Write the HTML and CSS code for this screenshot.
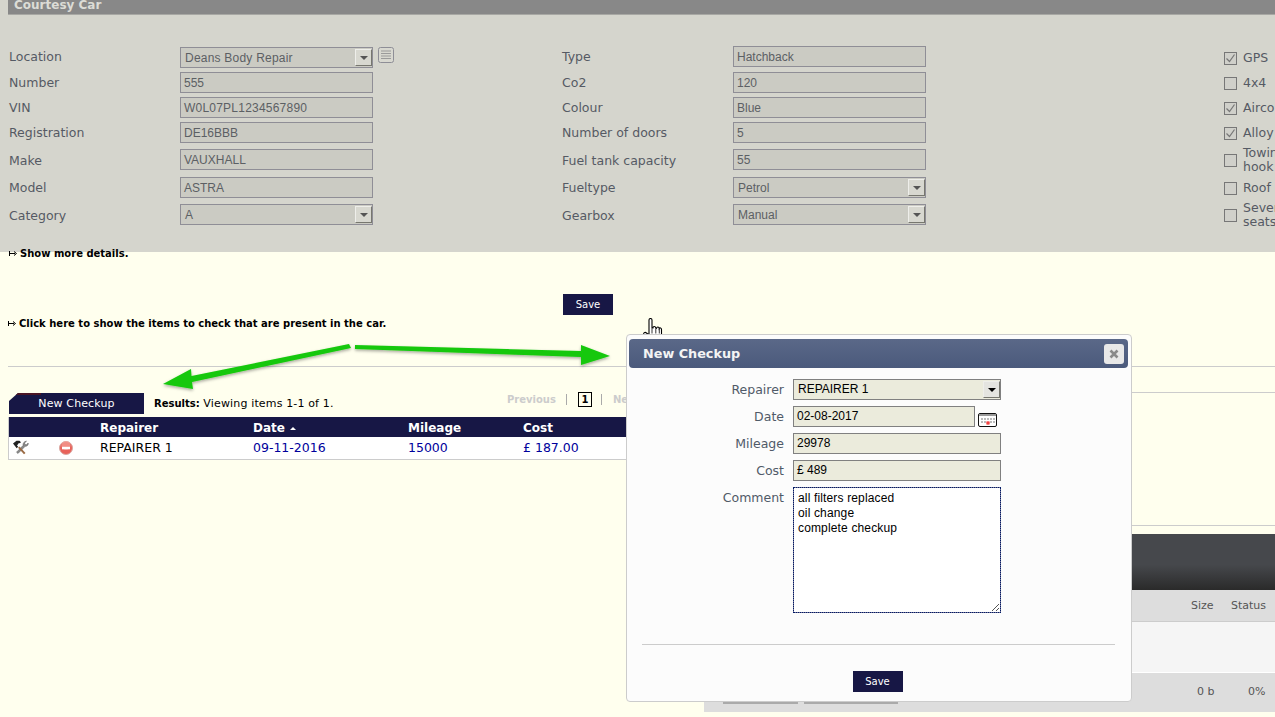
FILE: index.html
```html
<!DOCTYPE html>
<html lang="en">
<head>
<meta charset="utf-8">
<title>Courtesy Car</title>
<link rel="stylesheet" href="styles.css">
</head>
<body>
<section class="car">
  <h2 class="car-title">Courtesy Car</h2>
  <div class="car-form">
    <div class="lbl lbl-top">Location</div>
    <div class="field-wrap"><div class="fld sel wide">Deans Body Repair<span class="sel-btn"></span></div>
      <svg class="list-ico" width="16" height="16" viewBox="0 0 16 16"><rect x=".5" y=".5" width="15" height="15" rx="2" fill="#d8d8d0" stroke="#8e8e96"/><path d="M3 4h10M3 6.500h10M3 9h10M3 11.500h10" stroke="#9a9a9a"/></svg></div>
    <div class="lbl lbl-top">Type</div><div class="fld fld-up">Hatchback</div>
    <label class="chk"><span class="box on"><svg width="11" height="11" viewBox="0 0 11 11"><path d="M1.500 5.500l3 3 5-7" fill="none" stroke="#777" stroke-width="1.200"/></svg></span><span>GPS</span></label>

    <div class="lbl">Number</div><div class="fld">555</div>
    <div class="lbl">Co2</div><div class="fld">120</div>
    <label class="chk"><span class="box"></span><span>4x4</span></label>

    <div class="lbl">VIN</div><div class="fld wide">W0L07PL1234567890</div>
    <div class="lbl">Colour</div><div class="fld">Blue</div>
    <label class="chk"><span class="box on"><svg width="11" height="11" viewBox="0 0 11 11"><path d="M1.500 5.500l3 3 5-7" fill="none" stroke="#777" stroke-width="1.200"/></svg></span><span>Airco</span></label>

    <div class="lbl">Registration</div><div class="fld">DE16BBB</div>
    <div class="lbl">Number of doors</div><div class="fld">5</div>
    <label class="chk"><span class="box on"><svg width="11" height="11" viewBox="0 0 11 11"><path d="M1.500 5.500l3 3 5-7" fill="none" stroke="#777" stroke-width="1.200"/></svg></span><span>Alloy</span></label>

    <div class="lbl lbl-low">Make</div><div class="fld">VAUXHALL</div>
    <div class="lbl lbl-low">Fuel tank capacity</div><div class="fld">55</div>
    <label class="chk"><span class="box"></span><span>Towing hook</span></label>

    <div class="lbl">Model</div><div class="fld">ASTRA</div>
    <div class="lbl">Fueltype</div><div class="fld sel">Petrol<span class="sel-btn"></span></div>
    <label class="chk"><span class="box"></span><span>Roof</span></label>

    <div class="lbl lbl-low">Category</div><div class="fld sel">A<span class="sel-btn"></span></div>
    <div class="lbl lbl-low">Gearbox</div><div class="fld sel">Manual<span class="sel-btn"></span></div>
    <label class="chk"><span class="box"></span><span>Seven seats</span></label>
  </div>
</section>

<a class="toggle toggle-more"><svg class="tog-ico" width="8" height="5" viewBox="0 0 8 5"><path d="M.5 0v5M1 2.500h5M5 .5l2.500 2L5 4.500" fill="none" stroke="#000"/></svg>Show more details.</a>
<div class="save-row"><button class="btn">Save</button></div>
<a class="toggle toggle-items"><svg class="tog-ico" width="8" height="5" viewBox="0 0 8 5"><path d="M.5 0v5M1 2.500h5M5 .5l2.500 2L5 4.500" fill="none" stroke="#000"/></svg>Click here to show the items to check that are present in the car.</a>
<hr class="rule">

<div class="lower">
  <div class="lower-left">
    <div class="toolbar">
      <a class="tab">New Checkup</a>
      <div class="results"><b>Results:</b> Viewing items 1-1 of 1.</div>
      <div class="pager"><span class="pg-off">Previous</span><i class="pg-sep"></i><span class="pg-cur">1</span><i class="pg-sep"></i><span class="pg-off">Next</span></div>
    </div>
    <table class="grid">
      <colgroup><col class="c1"><col class="c2"><col class="c3"><col class="c4"><col class="c5"><col></colgroup>
      <thead><tr><th></th><th></th><th>Repairer</th><th>Date <span class="sort"></span></th><th>Mileage</th><th>Cost</th></tr></thead>
      <tbody><tr>
        <td><svg class="ico-tools" width="17" height="15" viewBox="0 0 17 15"><path d="M14.500 1.200l-2 1.800.4 1.500 1.500.3 1.800-1.800c.3 2-1 3.500-3 3.300L6 13.500l-1.500-1.300L11 5.500c-.3-2.300 1.300-4.300 3.500-4.300z" fill="#8a8a8a" stroke="#555" stroke-width=".5"/><path d="M7.500 6.500l6 6.500-1.500 1.300-6-6.500z" fill="#9a6b45"/><path d="M1 3.500L4.500.7h3l1.500 1.500-1.300 1-.8-.2L5 5.500l1.200 1.200-1.500 1.500z" fill="#222"/></svg></td>
        <td><svg class="ico-del" width="14" height="14" viewBox="0 0 14 14"><circle cx="7" cy="7" r="6.500" fill="#e8625a" stroke="#d9a8a2"/><circle cx="7" cy="4.500" r="4.500" fill="#f6a49b" opacity=".65"/><rect x="3" y="5.800" width="8" height="2.500" fill="#fff"/></svg></td>
        <td>REPAIRER 1</td><td class="lnk">09-11-2016</td><td class="lnk">15000</td><td class="lnk">£ 187.00</td>
      </tr></tbody>
    </table>
  </div>
  <div class="lower-right">
    <div class="band"></div>
    <div class="up-panel">
      <div class="up-dark"></div>
      <div class="up-head"><span>Size</span><span>Status</span></div>
      <div class="up-body"></div>
      <div class="up-foot"><span class="up-b1"></span><span class="up-b2"></span><span class="up-size">0 b</span><span class="up-pct">0%</span></div>
    </div>
  </div>
</div>

<svg class="arrows" width="640" height="60" viewBox="0 0 640 60">
  <defs><filter id="sh" x="-10%" y="-30%" width="120%" height="170%"><feDropShadow dx="0" dy="1.500" stdDeviation="1.500" flood-color="#000" flood-opacity=".35"/></filter></defs>
  <g fill="#14c80a" filter="url(#sh)">
    <path d="M349 4L351 8 192 42l1 7-30-5 28-15 .5 7z"/>
    <path d="M355 5v4l226 8v8l29-9-29-11v6z"/>
  </g>
</svg>

<svg class="cursor" width="20" height="26" viewBox="0 0 20 26"><path d="M6 2c0-2 3-2 3 0v8h1c0-2 2.500-2 2.800 0l.7.300c.3-1.700 2.500-1.700 2.700.2.500-1 2.300-.8 2.300 1v6c0 3-1.500 6.500-3 7.500H8c-2-1.500-4-5-7-8.500-1-1.500 1-3 2.500-1.500L6 17z" fill="#fff" stroke="#000" stroke-width="1.100"/><path d="M9 10.500v5M12.800 10.500v5M16.300 11v4.500" stroke="#000" stroke-width=".8"/></svg>

<div class="modal">
  <div class="modal-head"><span>New Checkup</span><button class="close" aria-label="Close"><svg width="10" height="10" viewBox="0 0 10 10"><path d="M1.500 1.500l7 7M8.500 1.500l-7 7" stroke="#8a8a8a" stroke-width="2.600"/></svg></button></div>
  <div class="modal-form">
    <div class="m-lbl">Repairer</div><div class="m-fld sel">REPAIRER 1<span class="sel-btn"></span></div>
    <div class="m-lbl">Date</div><div class="date-wrap"><div class="m-fld date">02-08-2017</div>
      <svg class="cal" width="19" height="14" viewBox="0 0 19 14"><rect x=".5" y=".5" width="18" height="13" rx="1.500" fill="#fff" stroke="#111"/><rect x="1" y="1" width="17" height="2" fill="#999"/><path d="M3 5h2v2H3zM6 5h2v2H6zM9 5h2v2H9zM12 5h2v2h-2zM15 5h2v2h-2zM3 8h2v2H3zM6 8h2v2H6zM12 8h2v2h-2zM15 8h2v2h-2z" fill="#bbb"/><rect x="8.500" y="8.500" width="3" height="3" fill="#e00"/><rect x="9.500" y="9.500" width="1" height="1" fill="#fff"/></svg></div>
    <div class="m-lbl">Mileage</div><div class="m-fld">29978</div>
    <div class="m-lbl">Cost</div><div class="m-fld">£ 489</div>
    <div class="m-lbl">Comment</div><div class="m-area">all filters replaced<br>oil change<br>complete checkup<svg class="grip" width="10" height="10" viewBox="0 0 10 10"><path d="M9 2L2 9M9 6L6 9" stroke="#555"/></svg></div>
  </div>
  <hr class="modal-rule">
  <div class="modal-foot"><button class="btn">Save</button></div>
</div>
</body>
</html>
```

FILE: styles.css
```css
* { box-sizing: border-box; }
html, body { margin: 0; height: 717px; overflow: hidden; }
body {
  position: relative;
  width: 1275px;
  background: #ffffee;
  font: 13px "DejaVu Sans", Verdana, sans-serif;
  color: #000;
}

/* Top greyed form */
.car { height: 252px; background: #d5d5cd; padding-left: 8px; overflow: hidden; }
.car-title {
  margin: 0;
  height: 15px;
  padding-left: 6px;
  background: #888;
  border-bottom: 1px solid #a8a8a4;
  color: #dcdcd6;
  font-size: 12px;
  font-weight: bold;
  line-height: 10px;
}
.car-form {
  display: grid;
  grid-template-columns: 171px 193px 189px 171px 193px 298px 60px;
  grid-template-rows: 25px 25px 25px 27px 28px 27px 21px;
  margin: 32px 0 0 1px;
  width: 1300px;
}
.car-form > :nth-child(5n + 1) { grid-column: 1; }
.car-form > :nth-child(5n + 3) { grid-column: 4; }
.car-form > :nth-child(5n) { grid-column: 7; }
.lbl { height: 21px; font-size: 12.500px; line-height: 22px; color: #555a64; }
.lbl-top { line-height: 20px; }
.lbl-low { line-height: 24px; }
.fld, .m-fld {
  position: relative;
  height: 21px;
  font: 12px/19px "Liberation Sans", Arial, sans-serif;
  padding-left: 3px;
  border: 1px solid #8f8e96;
}
.fld { background: #cbcbc3; color: #5c6064; line-height: 21px; }
.fld-up { margin-top: -1px; }
.wide { letter-spacing: .22px; }
.sel { padding-left: 4px; }
.field-wrap { display: flex; width: 214px; align-items: flex-start; }
.field-wrap .fld { width: 193px; flex: none; }
.list-ico { margin-left: 5px; flex: none; }
.sel-btn {
  position: absolute;
  right: 0;
  top: 1px;
  width: 17px;
  height: 17px;
  background: #d8d8d0;
  border: 1px solid;
  border-color: #eeeeea #77776f #77776f #eeeeea;
}
.sel-btn::after {
  content: "";
  position: absolute;
  left: 4px;
  top: 6px;
  border: 4px solid transparent;
  border-top: 4px solid #555;
  border-bottom: 0;
}
.chk { display: flex; align-items: center; height: 21px; width: 60px; font-size: 12.500px; color: #555a64; line-height: 14px; }
.chk > span:last-child { width: 41px; flex: none; }
.box {
  flex: none;
  width: 13px;
  height: 13px;
  margin: 2px 6px 0 0;
  background: #d0d0ca;
  border: 1px solid #777;
}
.box svg { display: block; }

/* Toggles */
.toggle { display: block; font-size: 10px; font-weight: bold; line-height: 12px; }
.tog-ico { margin-right: 3px; vertical-align: 1px; }
.toggle-more { padding-left: 9px; margin-top: -4px; }
.toggle-items { padding-left: 8px; margin-top: 3px; }
.save-row { display: flex; justify-content: flex-start; padding: 34px 0 0 563px; }
.btn {
  width: 50px;
  height: 21px;
  border: 0;
  padding: 0;
  background: #171745;
  color: #fff;
  font: 10px/21px "DejaVu Sans", Verdana, sans-serif;
}
.rule { margin: 36px 0 0 8px; border: 0; border-top: 1px solid #ccc; }

/* Lower area */
.lower { display: grid; grid-template-columns: 704px 571px; margin-top: 25px; }
.lower-left { padding-left: 8px; }
.toolbar { display: flex; height: 25px; align-items: flex-start; position: relative; }
.tab {
  width: 135px;
  margin: 1px 0 0 1px;
  height: 21px;
  text-align: center;
  color: #fff;
  font-size: 11px;
  letter-spacing: .12px;
  line-height: 21px;
  background: linear-gradient(#4a1525, #4a1525) 0 0 / 32px 2px no-repeat, #171745;
  clip-path: polygon(9px 0, 100% 0, 100% 100%, 0 100%, 0 8px);
}
.results { margin: 5px 0 0 10px; font-size: 11px; letter-spacing: .15px; line-height: 13px; }
.results b { font-size: 10px; letter-spacing: 0; }
.pager { position: absolute; left: 499px; top: 0; display: flex; align-items: center; height: 15px; font-size: 10px; font-weight: bold; }
.pg-off { color: #ccc; }
.pg-sep { width: 1px; height: 11px; background: #aaa; margin: 0 11px 0 10px; }
.pg-cur { width: 14px; height: 15px; margin-right: -1px; border: 1px solid #000; text-align: center; line-height: 13px; }
.grid { width: 696px; border-collapse: collapse; table-layout: fixed; background: #fff; border-left: 1px solid #ccc; }
.c1 { width: 46.500px; } .c2 { width: 41px; } .c3 { width: 153px; } .c4 { width: 155px; } .c5 { width: 115px; }
.grid th {
  height: 20px;
  padding: 1px 0 0 4px;
  text-align: left;
  background: #171745;
  color: #fff;
  font-size: 12px;
}
.grid td { height: 22px; padding: 0 0 0 4px; border-bottom: 1px solid #ccc; font-size: 12.500px; vertical-align: middle; }
.grid td svg { display: block; }
.ico-tools { margin-left: -1px; }
.lnk { color: #00009c; }
.sort { display: inline-block; border: 3px solid transparent; border-bottom: 3px solid #fff; border-top: 0; vertical-align: 2px; margin-left: 1px; }

.band { height: 134px; border-top: 1px solid #ccc; border-bottom: 1px solid #ccc; }
.up-panel { margin-top: 8px; height: 178px; display: flex; flex-direction: column; background: #ddd; font-size: 11px; color: #555; }
.up-dark { height: 56px; background: linear-gradient(#46484c 0, #46484c 55%, #2a2a2a 100%); }
.up-head { position: relative; height: 32px; border-bottom: 1px solid #ccc; }
.up-head span { position: absolute; top: 9px; }
.up-head span:first-child { left: 487px; }
.up-head span:last-child { left: 527px; }
.up-body { height: 51px; background: #f5f5f5; border-bottom: 1px solid #fff; }
.up-foot { position: relative; flex: 1; }
.up-foot span { position: absolute; }
.up-size { left: 493px; top: 12px; }
.up-pct { left: 544px; top: 12px; }
.up-b1, .up-b2 { top: 29px; height: 2px; background: #aaa; }
.up-b1 { left: 19px; width: 75px; }
.up-b2 { left: 100px; width: 94px; }

/* Overlays */
.arrows { position: absolute; left: 0; top: 340px; overflow: visible; pointer-events: none; }
.cursor { position: absolute; left: 643px; top: 318px; }
.modal {
  position: absolute;
  left: 626px;
  top: 334px;
  width: 506px;
  height: 368px;
  padding: 4px 3px 0 2px;
  background: #fcfcfc;
  border: 1px solid #ccc;
  border-radius: 4px;
}
.modal-head {
  display: flex;
  align-items: center;
  justify-content: space-between;
  height: 29px;
  padding: 0 4px 0 14px;
  border-radius: 4px;
  background: linear-gradient(#5a6888, #4b5a7c);
  color: #f4f4f4;
  font-size: 12.800px;
  font-weight: bold;
}
.close {
  display: flex;
  align-items: center;
  justify-content: center;
  width: 20px;
  height: 20px;
  padding: 0;
  border: 0;
  border-radius: 3px;
  background: #e8e8e8;
}
.modal-form {
  display: grid;
  grid-template-columns: 155px 208px;
  grid-auto-rows: 21px;
  column-gap: 9px;
  row-gap: 6px;
  margin-top: 11px;
}
.m-lbl { text-align: right; font-size: 12.500px; line-height: 21px; color: #505a68; }
.m-fld { background: #ebebdc; color: #000; border-color: #808080; }
.m-fld.sel { padding-left: 4px; }
.m-fld .sel-btn { background: #e4e4e0; }
.m-fld .sel-btn::after { border-top-color: #000; }
.date-wrap { display: flex; width: 208px; }
.date { width: 182px; flex: none; }
.cal { margin: 7px 0 0 3px; flex: none; }
.m-area {
  position: relative;
  height: 126px;
  padding: 3px 4px;
  background: #fff;
  border: 1px dotted #003a9c;
  outline: 1px solid rgba(0, 0, 60, .55);
  outline-offset: -1px;
  font: 12px/15px "Liberation Sans", Arial, sans-serif;
  letter-spacing: .15px;
}
.grip { position: absolute; right: 0; bottom: 0; }
.modal-rule { margin: 136px 13px 0 13px; border: 0; border-top: 1px solid #ccc; }
.modal-foot { display: flex; justify-content: center; padding: 26px 2px 0 0; }
```
